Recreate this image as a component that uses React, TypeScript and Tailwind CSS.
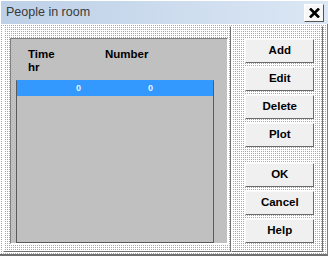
import { type ReactNode } from 'react';

const dither =
  'bg-[#a9a9a9] bg-[linear-gradient(90deg,#ffffff_1px,transparent_1px),linear-gradient(#ffffff_1px,transparent_1px)] bg-[length:2px_2px]';

function DlgButton({ children, className = '' }: { children: ReactNode; className?: string }) {
  return (
    <button
      className={`w-[69px] h-[24px] bg-[#f0f0f0] border-t border-l border-t-[#fafafa] border-l-[#fafafa] border-r border-b border-r-[#6a6a6a] border-b-[#6a6a6a] text-[11.5px] font-bold text-black leading-none ${className}`}
    >
      {children}
    </button>
  );
}

export default function App() {
  return (
    <div
      className="w-[328px] h-[256px] flex flex-col bg-[#d8d8d8] overflow-hidden"
      style={{ fontFamily: '"Liberation Sans", Arial, sans-serif' }}
    >
      {/* Title bar */}
      <div className="h-[24px] shrink-0 flex items-center justify-between pl-[5px] pr-[4px] bg-gradient-to-r from-[#bdd0e7] to-[#dbe7f4] border-t border-l border-white">
        <span className="text-[12.5px] text-[#3a3a3a]">People in room</span>
        <button className="w-[20px] h-[18px] flex items-center justify-center bg-[#f7f7f7] border-t border-l border-white border-r border-b border-r-[#555] border-b-[#555]">
          <svg width="11" height="10" viewBox="0 0 11 10">
            <path d="M1 0.5 L10 9.5 M10 0.5 L1 9.5" stroke="#000" strokeWidth="2.6" />
          </svg>
        </button>
      </div>

      {/* Body */}
      <div className={`flex-1 flex pl-[3px] pt-[2px] pb-[2px] pr-[4px] border-b-2 border-b-[#707070] border-r border-r-[#808080] ${dither}`}>
        {/* Left pane */}
        <div className="w-[229px] h-full border-t border-l border-white border-r border-b border-r-[#707070] border-b-[#707070] pl-[6px] pt-[11px]">
          <div className="w-[218px] h-[206px] bg-[#c0c0c0] border-t border-l border-t-[#808080] border-l-[#808080] border-r border-b border-r-white border-b-white flex flex-col">
            <div className="h-[41px] pl-[17px] pt-[9px] flex text-[11.5px] font-bold text-black leading-[13px]">
              <div className="w-[77px]">
                <div>Time</div>
                <div>hr</div>
              </div>
              <div>Number</div>
            </div>
            <div className="ml-[5px] w-[198px] h-[163px] border border-[#5a5a5a] border-t-[#3399ff]">
              <div className="h-[15px] bg-[#3399ff] flex items-center text-[9px] font-bold text-[#e8f4ff]">
                <span className="ml-[59px]">0</span>
                <span className="ml-[67px]">0</span>
              </div>
            </div>
          </div>
        </div>

        {/* Right pane */}
        <div className="w-[92px] h-full border-t border-l border-white border-r border-b border-r-[#707070] border-b-[#707070] pl-[13px] pt-[12px] flex flex-col gap-[4px]">
          <DlgButton>Add</DlgButton>
          <DlgButton>Edit</DlgButton>
          <DlgButton>Delete</DlgButton>
          <DlgButton>Plot</DlgButton>
          <DlgButton className="mt-[12px]">OK</DlgButton>
          <DlgButton>Cancel</DlgButton>
          <DlgButton>Help</DlgButton>
        </div>
      </div>
    </div>
  );
}
